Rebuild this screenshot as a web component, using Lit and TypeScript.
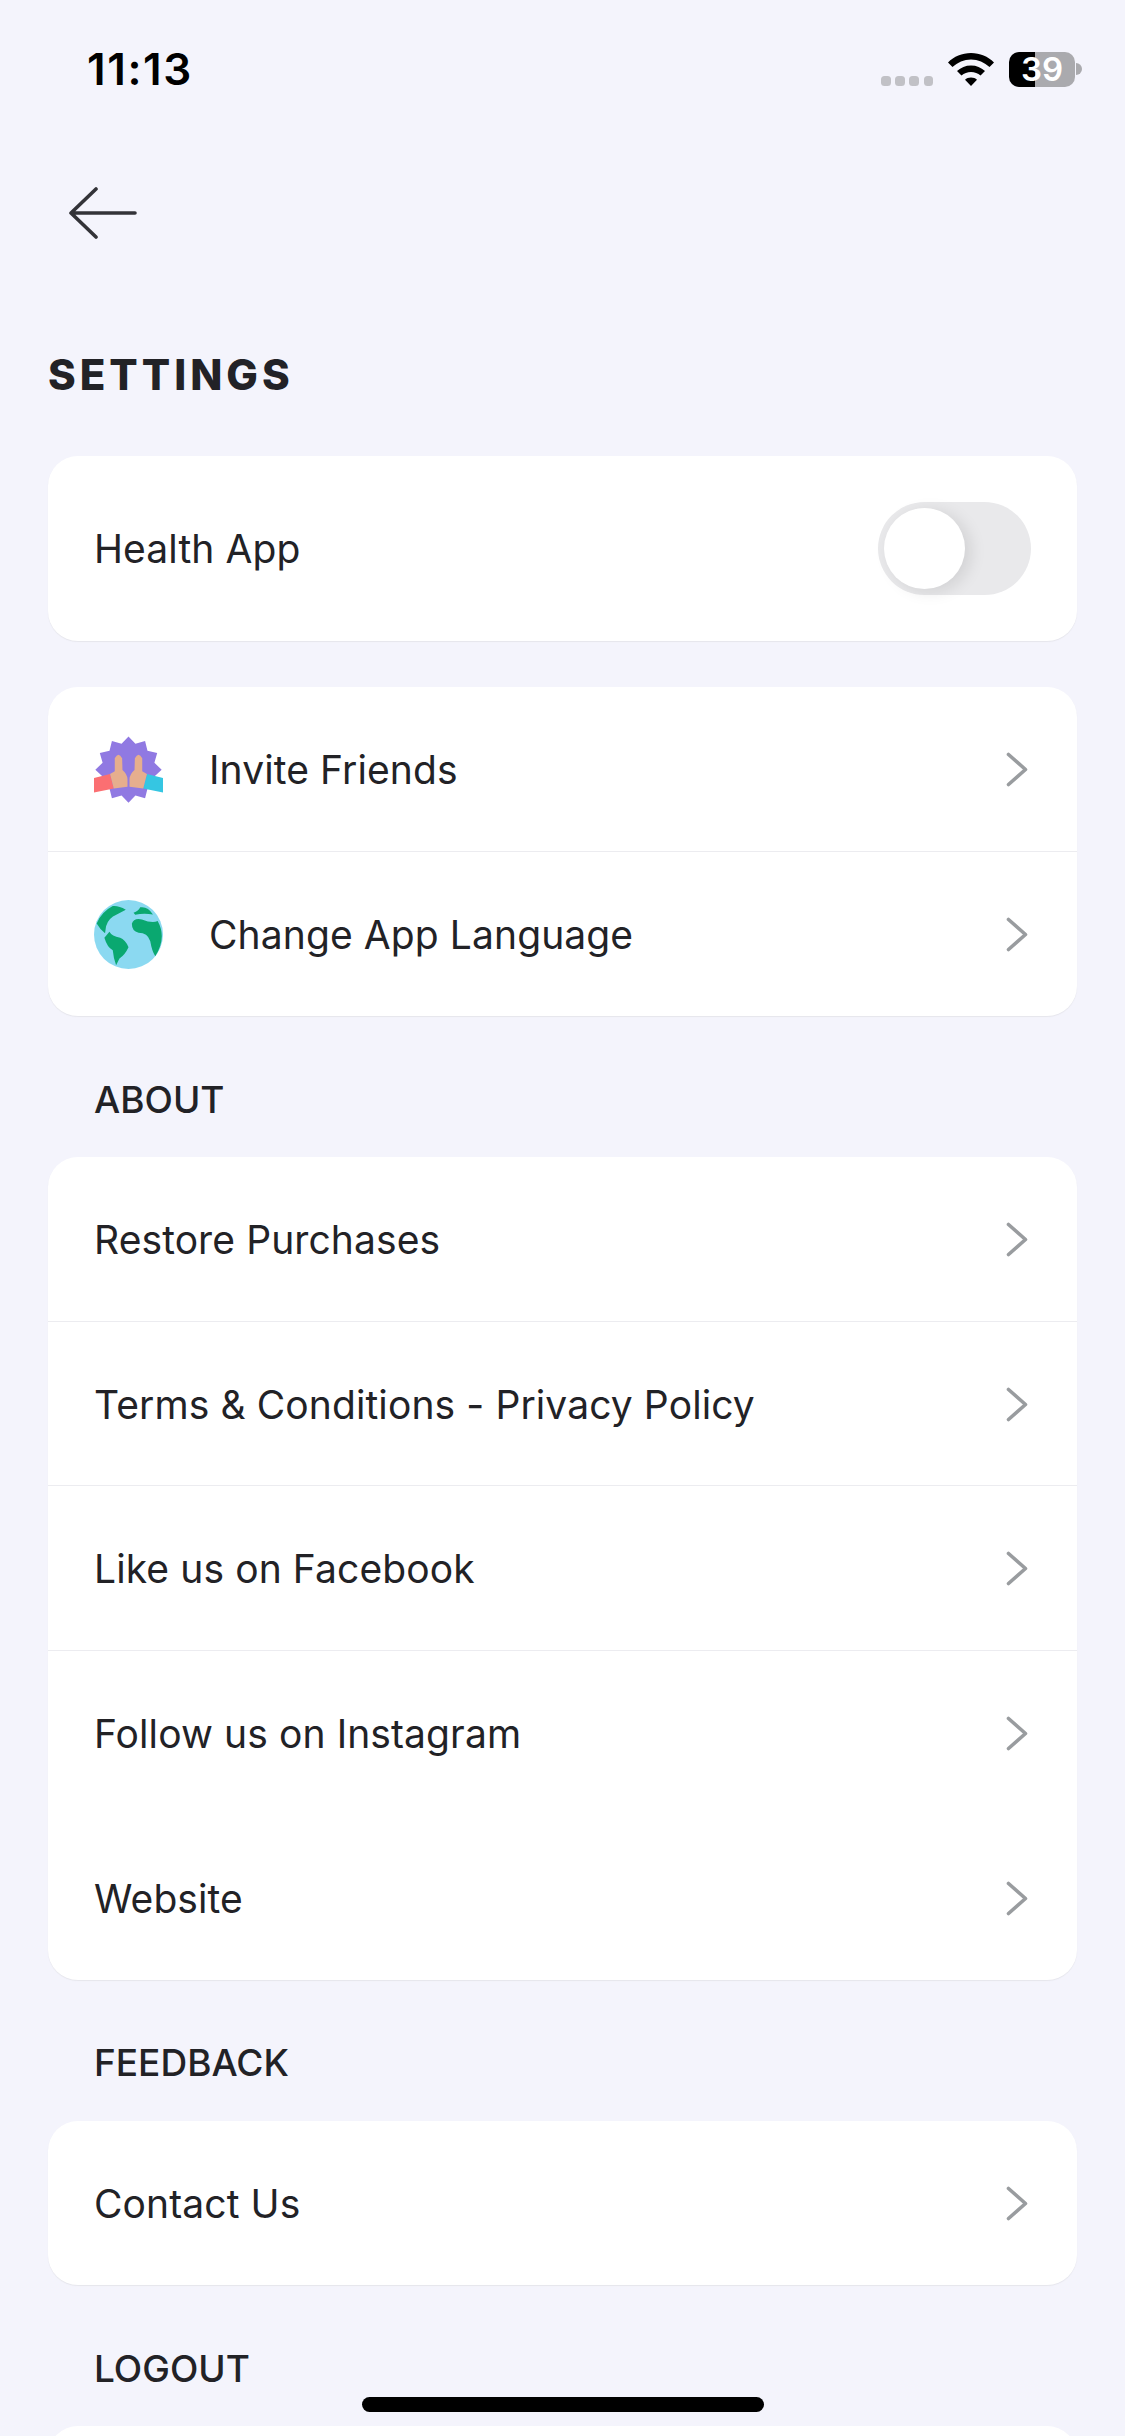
import { LitElement, html, css } from "lit";
import { customElement } from "lit/decorators.js";

const chevron = html`<svg class="chev" viewBox="0 0 24 37" fill="none" stroke="#999c9f" stroke-width="3.6" stroke-linecap="round" stroke-linejoin="round"><path d="M3.5 3.500 L20.500 18.500 L3.500 33.500"/></svg>`;

const burst = (() => {
  const pts: string[] = [];
  const n = 12;
  for (let i = 0; i < n * 2; i++) {
    const r = i % 2 === 0 ? 99 : 80;
    const a = (Math.PI * i) / n - Math.PI / 2;
    pts.push(`${(175 + r * Math.cos(a)).toFixed(1)},${(147 + r * Math.sin(a)).toFixed(1)}`);
  }
  return pts.join(" ");
})();

const inviteIcon = html`<svg class="ico" viewBox="72 48 206 197">
  <polygon points=${burst} fill="#9079e2"/>
  <path d="M72 172 L120 160 L131 203 L72 215 Z" fill="#fb6f72"/>
  <path d="M278 172 L230 160 L219 203 L278 215 Z" fill="#35c6e2"/>
  <path d="M120 160 L134 152 L134 113 Q145 92 156 113 L157 148 Q171 160 172 175 L172 198 L131 203 Z" fill="#e6ae8e"/>
  <path d="M230 160 L216 152 L216 113 Q205 92 194 113 L193 148 Q179 160 178 175 L178 198 L219 203 Z" fill="#e6ae8e"/>
</svg>`;

const globeIcon = html`<svg class="ico" viewBox="72 37 206 206">
  <circle cx="175" cy="140" r="103" fill="#8bd9f1"/>
  <path fill="#0aa870" d="M128 55 Q145 53 167 66 Q150 75 140 80 Q115 90 108 115 L105 136 Q90 125 80 107 Q95 72 128 55 Z"/>
  <path fill="#0aa870" d="M103 150 L118 132 Q125 145 150 150 Q165 155 175 178 Q165 200 148 212 L138 232 Q130 210 128 187 Q112 180 103 150 Z"/>
  <path fill="#0aa870" d="M190 75 Q205 70 210 59 Q232 55 248 80 Q220 75 195 81 Z"/>
  <path fill="#0aa870" d="M185 108 Q190 90 215 95 Q245 107 262 100 Q290 150 255 205 Q245 190 240 160 Q232 135 205 135 Q185 130 185 108 Z"/>
</svg>`;

interface Row { label: string; icon?: unknown; sep?: boolean }

@customElement("app-root")
export class AppRoot extends LitElement {
  static styles = css`
    :host { display: block; position: relative; width: 1125px; height: 2436px; overflow: hidden; background: #f4f4fc; font-family: Inter, "Liberation Sans", sans-serif; color: #222226; }
    .status { display: flex; align-items: center; height: 70px; padding: 34px 43px 0 87px; box-sizing: content-box; }
    .time { font-size: 44px; font-weight: 600; color: #000; line-height: 1; letter-spacing: 1.6px; flex: 1; }
    .sys { display: flex; align-items: center; gap: 15px; }
    .dots { display: flex; gap: 4.6px; margin-top: 24px; }
    .dot { width: 9.5px; height: 9.5px; border-radius: 3.5px; background: #c1c1c6; }
    .wifi { width: 46px; height: 33px; }
    .batt { display: flex; align-items: center; gap: 1px; }
    .cell { width: 66px; height: 35px; border-radius: 10px; background: linear-gradient(90deg, #000 0 26px, #aaaaae 26px); color: #fff; font-size: 33px; font-weight: 600; line-height: 35px; text-align: center; }
    .cap { width: 6px; height: 12px; border-radius: 0 6px 6px 0; background: #aaaaae; }
    .nav { padding: 83px 0 0 69px; height: 51px; }
    .back { display: block; width: 68px; height: 52px; }
    h1 { margin: 0; padding: 111px 0 0 48px; font-size: 42px; line-height: 51px; font-weight: 800; letter-spacing: 4px; color: #222226; }
    .cards { display: flex; flex-direction: column; padding: 56px 48px 0; }
    .card { background: #fff; border-radius: 30px; box-shadow: 0 1px 1px #e6e6ec; overflow: hidden; flex: none; }
    .gap { height: 46px; flex: none; }
    .row { display: flex; align-items: center; height: 164.5px; padding: 2px 46px 0; box-sizing: border-box; font-size: 39px; letter-spacing: 0.1px; }
    .row.tall { height: 185px; padding-top: 0; }
    .row.sep { border-bottom: 1px solid #ececf0; }
    .row .lbl { flex: 1; }
    .ico { width: 69px; height: 69px; margin-right: 46px; flex: none; display: block; }
    .chev { width: 24px; height: 37px; flex: none; margin-right: 2px; display: block; }
    .sec { height: 141px; display: flex; align-items: center; padding: 25px 0 0 46px; font-size: 37px; font-weight: 500; color: #222226; flex: none; box-sizing: border-box; }
    .toggle { position: relative; width: 153px; height: 93px; border-radius: 47px; background: #e9e9eb; flex: none; }
    .knob { position: absolute; left: 6px; top: 6px; width: 81px; height: 81px; border-radius: 50%; background: #fff; box-shadow: 6px 3px 16px rgba(0,0,0,.1); }
    .home { position: absolute; left: 362px; top: 2397px; width: 402px; height: 15px; border-radius: 8px; background: #000; }
  `;

  private rows(rows: Row[]) {
    return rows.map((r) => html`<div class="row ${r.sep ? "sep" : ""}">${r.icon ?? ""}<span class="lbl">${r.label}</span>${chevron}</div>`);
  }

  render() {
    return html`
      <div class="status">
        <div class="time">11:13</div>
        <div class="sys">
          <div class="dots"><i class="dot"></i><i class="dot"></i><i class="dot"></i><i class="dot"></i></div>
          <svg class="wifi" viewBox="0 0 46 33"><path d="M23 0 C32 0 40 3.500 46 9.500 L41.500 14 C36.500 9.500 30 6.500 23 6.500 C16 6.500 9.500 9.500 4.500 14 L0 9.500 C6 3.500 14 0 23 0 Z M23 12.500 C28.500 12.500 33 14.500 37 18 L32.500 22.500 C30 20.500 26.500 19 23 19 C19.500 19 16 20.500 13.500 22.500 L9 18 C13 14.500 17.500 12.500 23 12.500 Z M23 24.500 C25.500 24.500 27.500 25.300 29 26.800 L23 33 L17 26.800 C18.500 25.300 20.500 24.500 23 24.500 Z" fill="#000"/></svg>
          <div class="batt"><div class="cell">39</div><div class="cap"></div></div>
        </div>
      </div>
      <div class="nav">
        <svg class="back" viewBox="0 0 68 52" fill="none" stroke="#333338" stroke-width="3.6" stroke-linecap="round" stroke-linejoin="round"><path d="M66 26 H3 M27 2 L2 26 L27 50"/></svg>
      </div>
      <h1>SETTINGS</h1>
      <div class="cards">
        <div class="card"><div class="row tall"><span class="lbl">Health App</span><div class="toggle"><div class="knob"></div></div></div></div>
        <div class="gap"></div>
        <div class="card">${this.rows([
          { label: "Invite Friends", icon: inviteIcon, sep: true },
          { label: "Change App Language", icon: globeIcon },
        ])}</div>
        <div class="sec">ABOUT</div>
        <div class="card">${this.rows([
          { label: "Restore Purchases", sep: true },
          { label: "Terms & Conditions - Privacy Policy", sep: true },
          { label: "Like us on Facebook", sep: true },
          { label: "Follow us on Instagram" },
          { label: "Website" },
        ])}</div>
        <div class="sec">FEEDBACK</div>
        <div class="card">${this.rows([{ label: "Contact Us" }])}</div>
        <div class="sec">LOGOUT</div>
        <div class="card"><div class="row"></div></div>
      </div>
      <div class="home"></div>
    `;
  }
}
